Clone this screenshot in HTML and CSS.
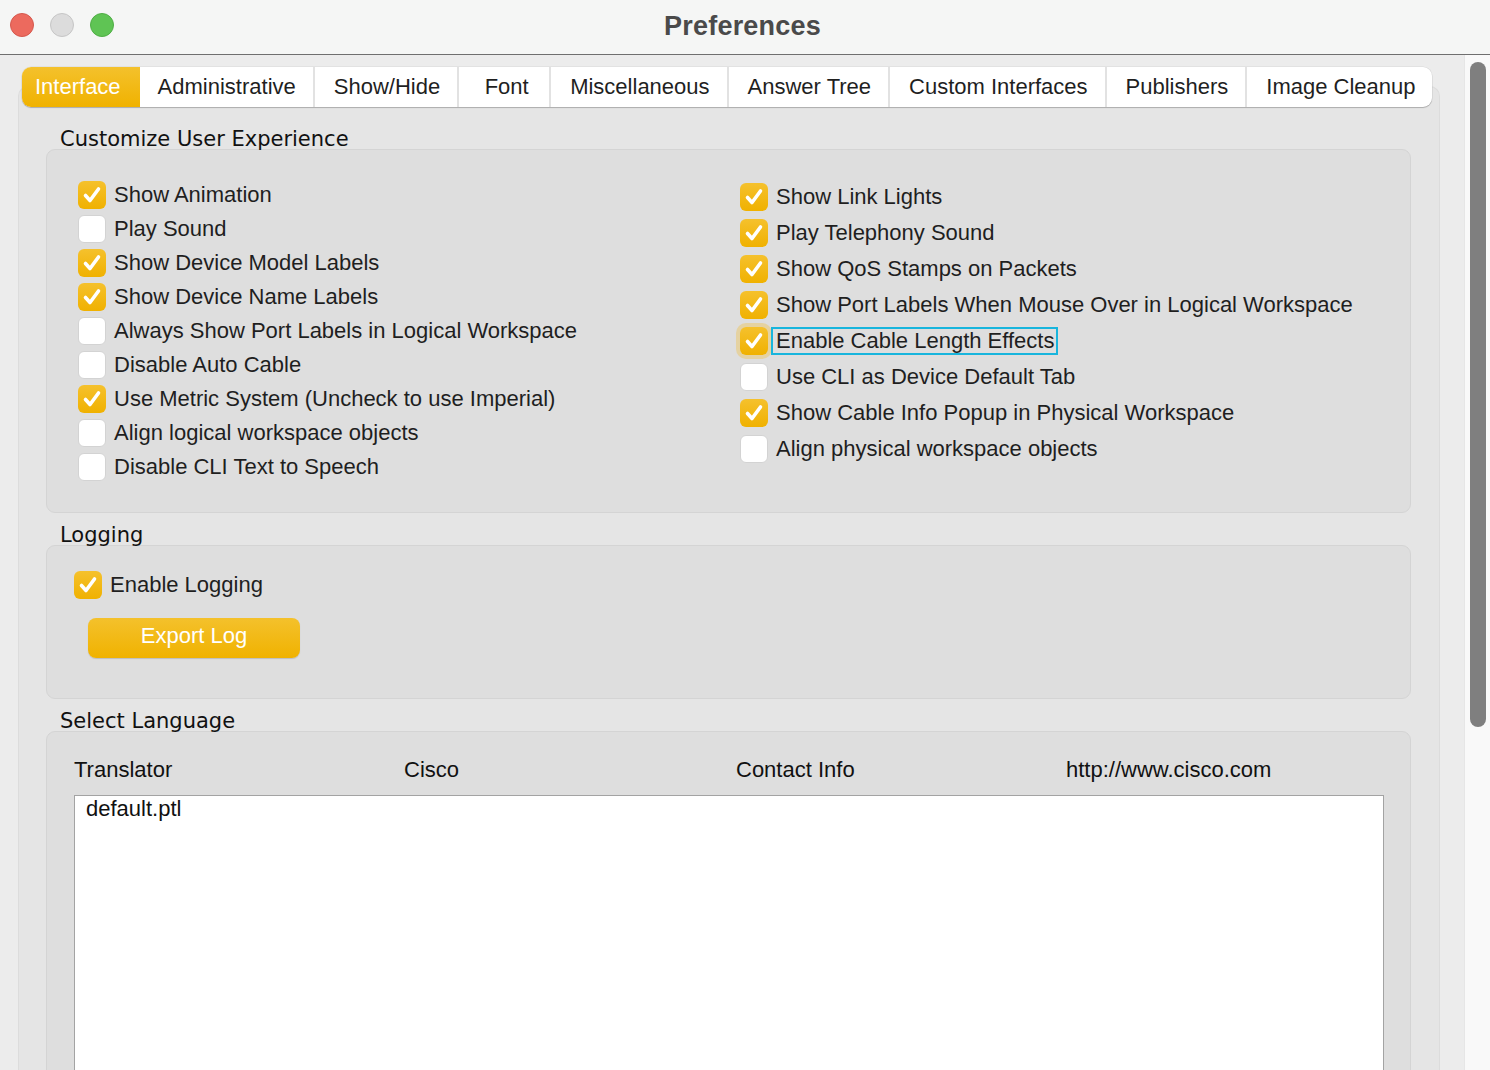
FILE: index.html
```html
<!DOCTYPE html>
<html>
<head>
<meta charset="utf-8">
<link rel="stylesheet" href="styles.css">
</head>
<body>
<div class="window">
  <div class="titlebar">
    <div class="lights">
      <span class="light red"></span>
      <span class="light gray"></span>
      <span class="light green"></span>
    </div>
    <div class="title">Preferences</div>
  </div>
  <div class="main">
    <div class="content">
      <div class="tabs">
        <div class="tab active">Interface</div>
        <div class="tab">Administrative</div>
        <div class="tab">Show/Hide</div>
        <div class="tab font">Font</div>
        <div class="tab">Miscellaneous</div>
        <div class="tab">Answer Tree</div>
        <div class="tab">Custom Interfaces</div>
        <div class="tab">Publishers</div>
        <div class="tab last">Image Cleanup</div>
      </div>
      <div class="pane">
        <div class="group">
          <div class="group-title"><span>Customize User Experience</span></div>
          <div class="group-box ux">
            <div class="col left">
              <label class="opt"><span class="cb on"><svg viewBox="0 0 28 28"><path d="M7.5 14.5 L12 19.5 L20.5 8"/></svg></span>Show Animation</label>
              <label class="opt"><span class="cb"></span>Play Sound</label>
              <label class="opt"><span class="cb on"><svg viewBox="0 0 28 28"><path d="M7.5 14.5 L12 19.5 L20.5 8"/></svg></span>Show Device Model Labels</label>
              <label class="opt"><span class="cb on"><svg viewBox="0 0 28 28"><path d="M7.5 14.5 L12 19.5 L20.5 8"/></svg></span>Show Device Name Labels</label>
              <label class="opt"><span class="cb"></span>Always Show Port Labels in Logical Workspace</label>
              <label class="opt"><span class="cb"></span>Disable Auto Cable</label>
              <label class="opt"><span class="cb on"><svg viewBox="0 0 28 28"><path d="M7.5 14.5 L12 19.5 L20.5 8"/></svg></span>Use Metric System (Uncheck to use Imperial)</label>
              <label class="opt"><span class="cb"></span>Align logical workspace objects</label>
              <label class="opt"><span class="cb"></span>Disable CLI Text to Speech</label>
            </div>
            <div class="col right">
              <label class="opt"><span class="cb on"><svg viewBox="0 0 28 28"><path d="M7.5 14.5 L12 19.5 L20.5 8"/></svg></span>Show Link Lights</label>
              <label class="opt"><span class="cb on"><svg viewBox="0 0 28 28"><path d="M7.5 14.5 L12 19.5 L20.5 8"/></svg></span>Play Telephony Sound</label>
              <label class="opt"><span class="cb on"><svg viewBox="0 0 28 28"><path d="M7.5 14.5 L12 19.5 L20.5 8"/></svg></span>Show QoS Stamps on Packets</label>
              <label class="opt"><span class="cb on"><svg viewBox="0 0 28 28"><path d="M7.5 14.5 L12 19.5 L20.5 8"/></svg></span>Show Port Labels When Mouse Over in Logical Workspace</label>
              <label class="opt focused"><span class="cb on"><svg viewBox="0 0 28 28"><path d="M7.5 14.5 L12 19.5 L20.5 8"/></svg></span><span class="focus-text">Enable Cable Length Effects</span></label>
              <label class="opt"><span class="cb"></span>Use CLI as Device Default Tab</label>
              <label class="opt"><span class="cb on"><svg viewBox="0 0 28 28"><path d="M7.5 14.5 L12 19.5 L20.5 8"/></svg></span>Show Cable Info Popup in Physical Workspace</label>
              <label class="opt"><span class="cb"></span>Align physical workspace objects</label>
            </div>
          </div>
        </div>
        <div class="group">
          <div class="group-title"><span>Logging</span></div>
          <div class="group-box logging">
            <label class="opt"><span class="cb on"><svg viewBox="0 0 28 28"><path d="M7.5 14.5 L12 19.5 L20.5 8"/></svg></span>Enable Logging</label>
            <button class="btn">Export Log</button>
          </div>
        </div>
        <div class="group">
          <div class="group-title"><span>Select Language</span></div>
          <div class="group-box lang">
            <div class="lang-head">
              <span>Translator</span>
              <span>Cisco</span>
              <span>Contact Info</span>
              <span>http://www.cisco.com</span>
            </div>
            <div class="listbox">
              <div class="list-item">default.ptl</div>
            </div>
          </div>
        </div>
      </div>
    </div>
    <div class="gutter"></div>
    <div class="scrollbar"><div class="thumb"></div></div>
  </div>
</div>
</body>
</html>
```
FILE: styles.css
```css
* { box-sizing: border-box; }
html, body {
  margin: 0;
  padding: 0;
  width: 1490px;
  height: 1070px;
  overflow: hidden;
  background: #ececec;
  font-family: "Liberation Sans", Arial, sans-serif;
  color: #1e1e1e;
}
.window {
  width: 1490px;
  height: 1070px;
  display: flex;
  flex-direction: column;
  overflow: hidden;
}
.titlebar {
  height: 55px;
  flex: none;
  background: #f5f6f5;
  border-bottom: 1px solid #6f6f6f;
  display: flex;
  align-items: center;
  padding-left: 10px;
}
.lights {
  display: flex;
  gap: 16px;
  width: 120px;
  margin-top: -4px;
}
.light {
  width: 24px;
  height: 24px;
  border-radius: 50%;
  display: block;
}
.light.red { background: #ec6a5e; border: 1px solid #d5584d; }
.light.gray { background: #dcdcdc; border: 1px solid #c6c6c6; }
.light.green { background: #5fc454; border: 1px solid #4fae45; }
.title {
  flex: 1;
  text-align: center;
  font-weight: bold;
  font-size: 27px;
  color: #4a4a4a;
  margin-left: -135px;
  margin-top: -2px;
  letter-spacing: 0.2px;
}
.main {
  flex: 1;
  display: flex;
  min-height: 0;
}
.content {
  width: 1440px;
  flex: none;
  padding: 12px 0 0 18px;
  display: flex;
  flex-direction: column;
}
.gutter {
  width: 24px;
  flex: none;
  background: #ececec;
}
.scrollbar {
  width: 26px;
  flex: none;
  background: #f9f9f9;
  border-left: 1px solid #e6e6e6;
  padding: 7px 0 0 5px;
}
.thumb {
  width: 16px;
  height: 665px;
  border-radius: 8px;
  background: #7f7f7f;
}
.tabs {
  display: flex;
  margin-left: 4px;
  height: 40px;
  align-self: flex-start;
  position: relative;
  z-index: 1;
  margin-bottom: -21px;
  background: #fff;
  border-radius: 9px;
  box-shadow: 0 1px 1px rgba(0,0,0,0.22), 0 0 0 0.5px rgba(0,0,0,0.08);
}
.tab {
  font-size: 22px;
  color: #1f1f1f;
  line-height: 40px;
  padding: 0 17px 0 19px;
  border-left: 2px solid #e2e2e2;
  white-space: nowrap;
  text-align: center;
}
.tab.font { min-width: 92px; padding-left: 22px; }
.tab.active {
  background: linear-gradient(#f4c12c, #f0b200);
  color: #fff;
  border-left: none;
  border-radius: 9px 0 0 9px;
  padding: 0 19px 0 13px;
}
.tab.active + .tab { border-left: none; padding-left: 18px; }
.tab.last { padding-right: 16px; }
.pane {
  flex: 1;
  background: #e5e5e5;
  border: 1px solid #dcdcdc;
  border-bottom: none;
  border-radius: 10px 10px 0 0;
  padding: 42px 28px 0 27px;
}
.group-title {
  height: 20px;
  line-height: 20px;
  padding-left: 14px;
  font-family: "DejaVu Sans", sans-serif;
  font-size: 21px;
  color: #111;
}
.group-title span {
  background: #e5e5e5;
  display: inline-block;
  padding-right: 2px;
}
.group-box {
  background: #dedede;
  border: 1px solid #d4d4d4;
  border-radius: 9px;
}
.ux {
  height: 364px;
  display: flex;
  padding: 28px 0 0 31px;
  margin-bottom: 12px;
}
.col { display: flex; flex-direction: column; }
.col.left { width: 662px; }
.col.left .opt { height: 34px; }
.col.right { margin-top: 1px; }
.col.right .opt { height: 36px; }
.opt {
  display: flex;
  align-items: center;
  gap: 8px;
  font-size: 22px;
  color: #1f1f1f;
  white-space: nowrap;
}
.cb {
  width: 28px;
  height: 28px;
  flex: none;
  border-radius: 6px;
  background: #fff;
  border: 1px solid #d3d3d3;
  display: block;
}
.cb.on {
  background: linear-gradient(#f5c12d, #f0b100);
  border: none;
}
.cb svg {
  width: 28px;
  height: 28px;
  display: block;
}
.cb svg path {
  fill: none;
  stroke: #fff;
  stroke-width: 3.6;
  stroke-linecap: round;
  stroke-linejoin: round;
}
.focused .cb {
  box-shadow: 0 0 0 4px rgba(238, 196, 86, 0.45);
}
.focus-text {
  border: 2px solid #18b5dd;
  padding: 0 2px 0 3px;
  margin-left: -5px;
  line-height: 24px;
}
.logging {
  height: 154px;
  padding: 25px 0 0 27px;
  margin-bottom: 12px;
}
.logging .opt { height: 28px; }
.btn {
  display: block;
  margin: 19px 0 0 14px;
  width: 212px;
  height: 40px;
  border: none;
  border-radius: 8px;
  background: linear-gradient(#f4c12c, #f0b200);
  color: #fff;
  font-family: "Liberation Sans", Arial, sans-serif;
  font-size: 22px;
  padding: 0 0 5px 0;
  box-shadow: 0 1px 1px rgba(0,0,0,0.15);
}
.lang {
  height: 400px;
  padding: 25px 27px 0 27px;
}
.lang-head {
  display: grid;
  grid-template-columns: 330px 332px 330px 1fr;
  font-size: 22px;
  color: #111;
  height: 38px;
  line-height: 26px;
}
.listbox {
  background: #fff;
  border: 1px solid #a3a3a3;
  width: 1310px;
  height: 400px;
  padding: 1px 0 0 11px;
}
.list-item {
  font-size: 22px;
  color: #111;
  line-height: 24px;
}
```
